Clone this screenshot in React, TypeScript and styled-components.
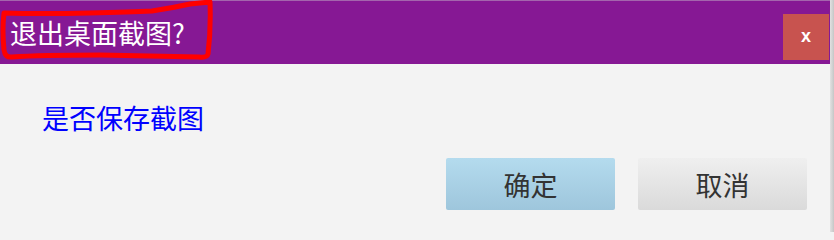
import React from "react";
import styled, { createGlobalStyle } from "styled-components";

const GlobalStyle = createGlobalStyle`
  html, body {
    margin: 0;
    padding: 0;
    width: 834px;
    height: 232px;
    overflow: hidden;
    background: #f3f3f3;
  }
`;

const App = () => {
  return (
    <Page>
      <GlobalStyle />
      <Dialog>
        <TitleBar>
          <Title>退出桌面截图?</Title>
          <CloseButton>x</CloseButton>
        </TitleBar>
        <Body>
          <Message>是否保存截图</Message>
          <ButtonRow>
            <DialogButton $primary>确定</DialogButton>
            <DialogButton>取消</DialogButton>
          </ButtonRow>
        </Body>
      </Dialog>
      <EdgeShadow />
      <Annotation width="216" height="64" viewBox="0 0 216 64">
        <path d="M4 13 Q40 14 90 13 Q130 12 152 11 Q172 8 190 4 L210 2 Q211 30 208 54 Q207 58 199 57 L100 55 Q40 55 12 57 Q5 58 4 50 Q2 30 4 13 Z" />
      </Annotation>
    </Page>
  );
};

export default App;

const Page = styled.div`
  position: relative;
  display: flex;
  width: 834px;
  height: 232px;
  font-family: "Noto Sans CJK SC", "Noto Sans", sans-serif;
`;

const Dialog = styled.div`
  display: flex;
  flex-direction: column;
  width: 830px;
  background: #f3f3f3;
`;

const TitleBar = styled.div`
  display: flex;
  align-items: center;
  justify-content: space-between;

  height: 63px;
  padding-left: 10px;

  background: #861894;
  border-top: 1px solid #a465ad;
`;

const Title = styled.div`
  font-size: 27px;
  line-height: 27px;
  color: #ffffff;
`;

const CloseButton = styled.div`
  display: flex;
  align-items: center;
  justify-content: center;
  align-self: flex-start;

  width: 46px;
  height: 46px;
  margin-top: 13px;
  margin-right: 1px;

  background: #c8534f;
  color: #ffffff;
  font-family: "Liberation Sans", Arial, sans-serif;
  font-weight: bold;
  font-size: 18px;
  line-height: 1;
  padding-bottom: 3px;
  box-sizing: border-box;
`;

const Body = styled.div`
  display: flex;
  flex-direction: column;
  flex: 1;
  padding-top: 40px;
`;

const Message = styled.div`
  padding-left: 42px;

  font-size: 27px;
  line-height: 27px;
  color: #0000ff;
`;

const ButtonRow = styled.div`
  display: flex;
  justify-content: flex-end;
  gap: 23px;

  margin-top: 27px;
  padding-right: 23px;
`;

const DialogButton = styled.div<{ $primary?: boolean }>`
  display: flex;
  align-items: center;
  justify-content: center;

  width: 169px;
  height: 52px;

  font-size: 27px;
  color: #333333;
  background: ${(p) =>
    p.$primary
      ? "linear-gradient(to bottom, #b4dbee, #9ec6dc)"
      : "linear-gradient(to bottom, #efefef, #dadada)"};

  border-radius: 2px;
`;

const EdgeShadow = styled.div`
  width: 4px;
  background: linear-gradient(to right, #e2e2e2, #c6c6c6);
`;

const Annotation = styled.svg`
  position: absolute;
  top: 0;
  left: 0;
  pointer-events: none;

  path {
    fill: none;
    stroke: #ff0000;
    stroke-width: 5;
    stroke-linejoin: round;
  }
`;
